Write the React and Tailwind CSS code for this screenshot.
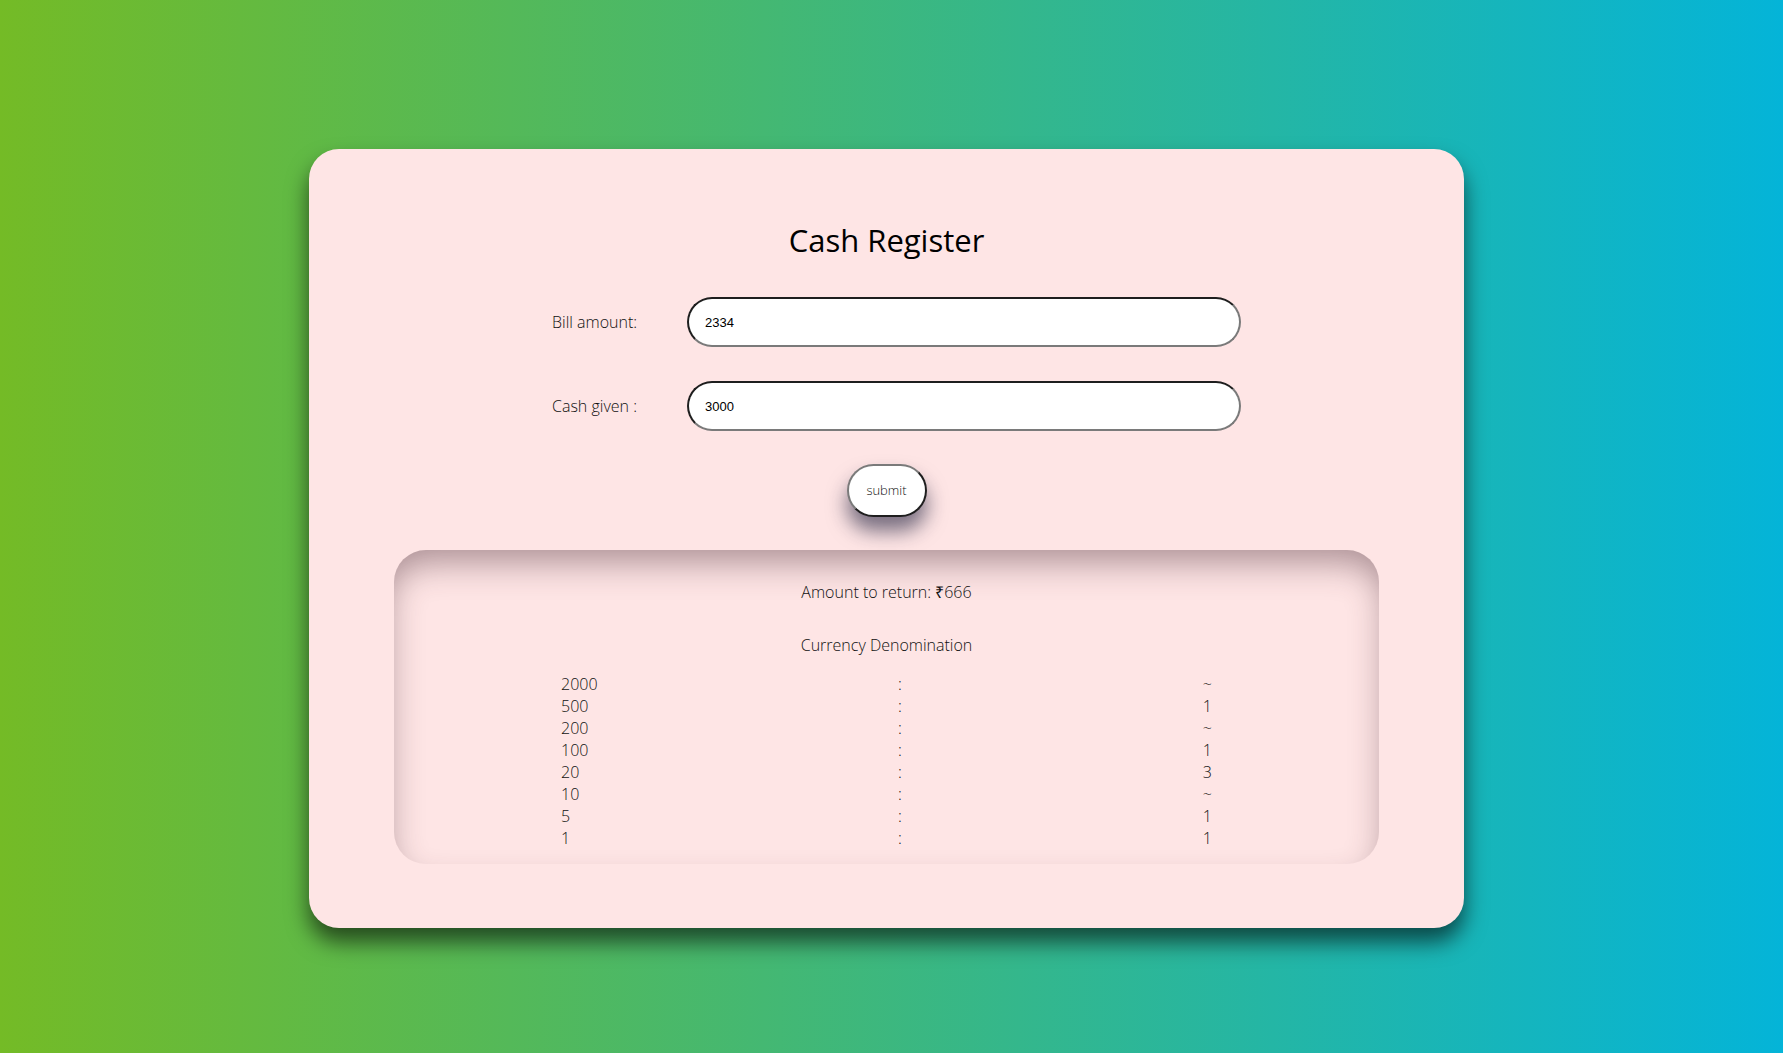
import React from "react";

const rows = [
  ["2000", "~"],
  ["500", "1"],
  ["200", "~"],
  ["100", "1"],
  ["20", "3"],
  ["10", "~"],
  ["5", "1"],
  ["1", "1"],
];

export default function App() {
  return (
    <div className="min-h-screen w-full bg-[linear-gradient(to_right,#74bb26,#04b4d8)] pt-[149px] pb-[125px] font-['Open_Sans',sans-serif]">
      <div className="flex justify-center pr-[10px]">
        <div className="w-[1155px] h-[779px] rounded-[30px] bg-[#fee5e5] shadow-[0_14px_22px_rgba(0,0,0,0.6)] flex flex-col items-center pt-[69px]">
          <h1 className="text-[31px] leading-[44px] font-normal text-black">Cash Register</h1>

          <div className="mt-[35px] flex flex-col gap-[34px] pl-[20px]">
            <div className="flex items-center">
              <label className="w-[135px] text-[16px] font-light text-[#111]">Bill amount:</label>
              <input
                readOnly
                value="2334"
                className="w-[554px] h-[50px] rounded-full bg-white border-2 border-t-[#1e1e1e] border-l-[#1e1e1e] border-b-[#7a7a7a] border-r-[#7a7a7a] pl-[16px] text-[13px] text-black font-['Liberation_Sans',Arial,sans-serif] outline-none"
              />
            </div>
            <div className="flex items-center">
              <label className="w-[135px] text-[16px] font-light text-[#111]">Cash given :</label>
              <input
                readOnly
                value="3000"
                className="w-[554px] h-[50px] rounded-full bg-white border-2 border-t-[#1e1e1e] border-l-[#1e1e1e] border-b-[#7a7a7a] border-r-[#7a7a7a] pl-[16px] text-[13px] text-black font-['Liberation_Sans',Arial,sans-serif] outline-none"
              />
            </div>
          </div>

          <button className="mt-[33px] w-[80px] h-[53px] rounded-full bg-white border-2 border-t-[#7a7a7a] border-l-[#7a7a7a] border-b-[#1e1e1e] border-r-[#1e1e1e] text-[13px] font-light text-[#111] shadow-[0_14px_20px_rgba(30,30,60,0.6)]">
            submit
          </button>

          <div className="mt-[33px] w-[985px] h-[314px] rounded-[32px] bg-[#fee5e5] shadow-[inset_0_18px_34px_-6px_rgba(70,40,50,0.45)] flex flex-col items-center pt-[31px]">
            <p className="text-[16px] leading-[22px] font-light text-[#111]">Amount to return: ₹666</p>
            <p className="mt-[31px] text-[16px] leading-[22px] font-light text-[#111]">Currency Denomination</p>
            <div className="mt-[17px] w-[651px] grid grid-cols-[337px_20px_1fr] text-[16px] leading-[22px] font-light text-[#111]">
              {rows.map(([d, c]) => (
                <React.Fragment key={d}>
                  <div className="text-left">{d}</div>
                  <div className="text-left">:</div>
                  <div className="text-right">{c}</div>
                </React.Fragment>
              ))}
            </div>
          </div>
        </div>
      </div>
    </div>
  );
}
